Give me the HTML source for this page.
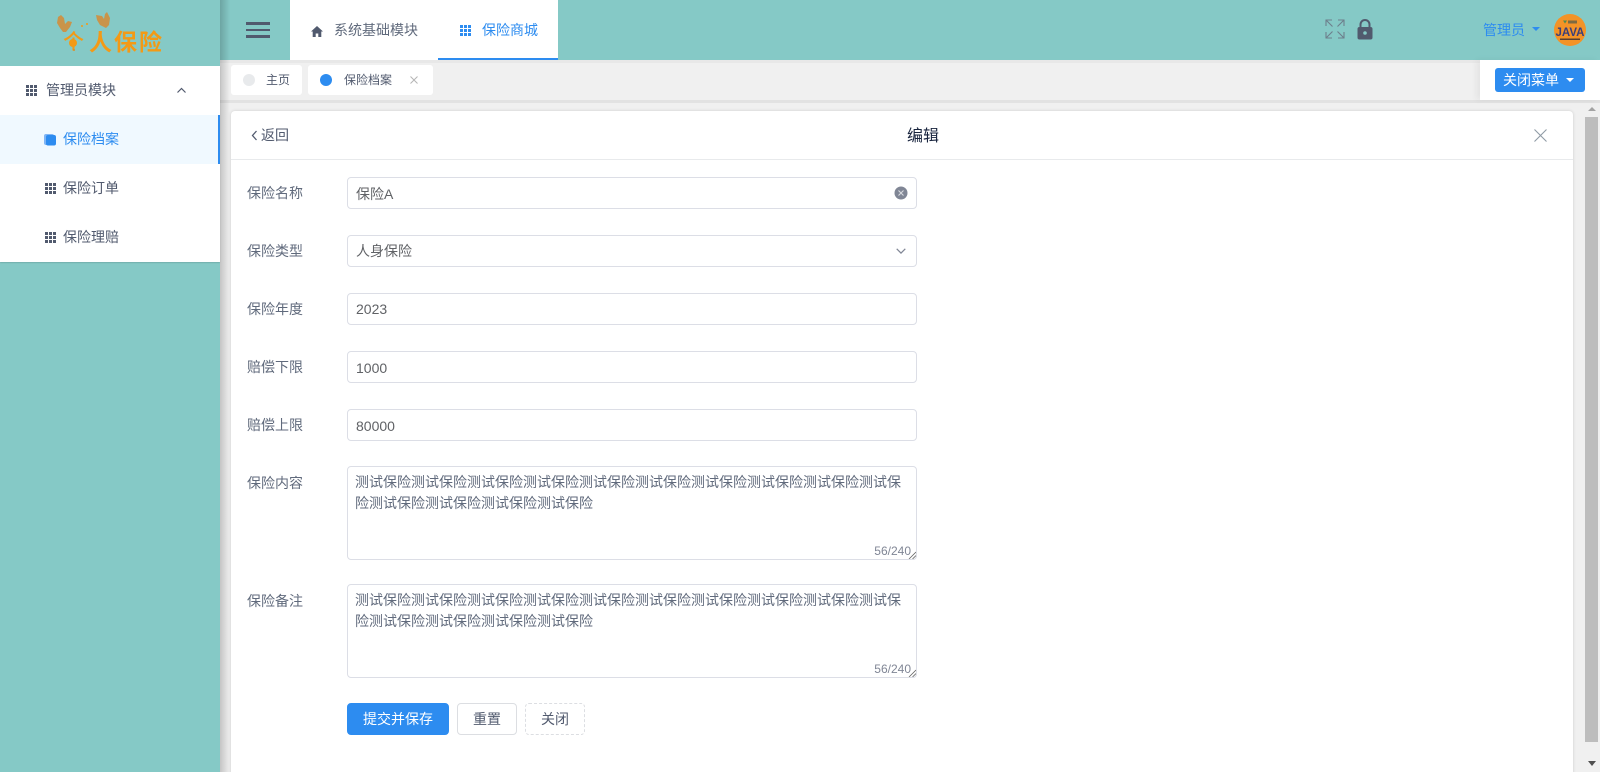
<!DOCTYPE html>
<html lang="zh"><head><meta charset="utf-8"><title>保险档案</title>
<style>
*{box-sizing:border-box;margin:0;padding:0}
html,body{width:1600px;height:772px;overflow:hidden}
body{position:relative;background:#f0f0f0;font:14px/20px "Liberation Sans","WenQuanYi Zen Hei","Noto Sans CJK SC",sans-serif;color:#515a6e}
.a{position:absolute}
.t{position:absolute;white-space:nowrap}
.in{position:absolute;left:347px;width:570px;height:32px;border:1px solid #dcdee6;border-radius:4px;background:#fff;padding:5px 8px;line-height:20px;color:#606266}
.ta{position:absolute;left:347px;width:570px;height:94px;border:1px solid #dcdee6;border-radius:4px;background:#fff;padding:5px 7px;line-height:21px;color:#606a7c;word-break:break-all}
.cnt{position:absolute;right:5px;bottom:0;font-size:12px;line-height:16px;color:#808695}
.lb{position:absolute;left:247px;white-space:nowrap;color:#606a7c}
.btn{position:absolute;top:703px;height:32px;border-radius:4px;text-align:center;line-height:30px;background:#fff;border:1px solid #dcdee2}
</style></head><body>

<!-- sidebar -->
<div class="a" style="left:0;top:0;width:220px;height:772px;background:#85c9c6"></div>
<!-- header -->
<div class="a" style="left:220px;top:0;width:1380px;height:60px;background:#85c9c6"></div>
<div class="a" style="left:220px;top:60px;width:1380px;height:40px;background:#f0f0f0;border-top:3px solid #e8e8e8"></div>
<div class="a" style="left:220px;top:100px;width:1380px;height:3px;background:#e2e2e2"></div>
<div class="a" style="left:220px;top:0;width:10px;height:772px;background:linear-gradient(90deg,#0000002e,#0000);pointer-events:none"></div>

<!-- logo -->
<svg class="a" style="left:50px;top:5px" width="125" height="50" viewBox="0 0 125 50">
<text x="13" y="44" font-family="'Noto Sans CJK SC',sans-serif" font-size="21" font-weight="500" fill="#f39a16">个</text>
<text x="39" y="45" font-family="'Noto Sans CJK SC',sans-serif" font-size="23" font-weight="700" fill="#f39a16" letter-spacing="2">人保险</text>
<path d="M8 12l3-2 3 3 1 6 3-3 4 1-2 5-4 5-3 0-3-4-3-5z" fill="#c9944a"/>
<path d="M46 10l6 1 2 3 1-5 2-2 3 6-1 7-3 3-6-3-3-5z" fill="#c9944a"/>
<circle cx="23" cy="38" r="4" fill="#f39a16"/><circle cx="24" cy="45" r="1" fill="#d98f28"/><circle cx="32" cy="21" r="1" fill="#f39a16"/><circle cx="37" cy="19" r="1" fill="#f39a16"/>
</svg>

<!-- menu -->
<div class="a" style="left:0;top:66px;width:220px;height:196px;background:#fff;box-shadow:0 1px 1px #0002"></div>
<div class="a" style="left:0;top:115px;width:220px;height:49px;background:#f0f9ff;border-right:2px solid #2d8cf0"></div>
<svg width="0" height="0" style="position:absolute"><defs>
<g id="g"><rect x="0" y="0" width="3" height="3"/><rect x="4" y="0" width="3" height="3"/><rect x="8" y="0" width="3" height="3"/><rect x="0" y="4" width="3" height="3"/><rect x="4" y="4" width="3" height="3"/><rect x="8" y="4" width="3" height="3"/><rect x="0" y="8" width="3" height="3"/><rect x="4" y="8" width="3" height="3"/><rect x="8" y="8" width="3" height="3"/></g>
</defs></svg>
<svg class="a" style="left:26px;top:85px" width="11" height="11" fill="#515a6e"><use href="#g"/></svg>
<div class="t" style="left:46px;top:80px">管理员模块</div>
<svg class="a" style="left:176px;top:87px" width="11" height="7" fill="none" stroke="#515a6e" stroke-width="1.2"><path d="M1.5 5.5L5.5 1.5 9.5 5.5"/></svg>
<svg class="a" style="left:44px;top:133px" width="13" height="13"><rect x="0" y="1" width="10" height="11" rx="2" fill="#7fb5f5"/><rect x="2" y="2" width="10" height="10.500" rx="2" fill="#2d8cf0"/></svg>
<div class="t" style="left:63px;top:129px;color:#2d8cf0">保险档案</div>
<svg class="a" style="left:45px;top:183px" width="11" height="11" fill="#515a6e"><use href="#g"/></svg>
<div class="t" style="left:63px;top:178px">保险订单</div>
<svg class="a" style="left:45px;top:232px" width="11" height="11" fill="#515a6e"><use href="#g"/></svg>
<div class="t" style="left:63px;top:227px">保险理赔</div>

<!-- hamburger -->
<div class="a" style="left:246px;top:22px;width:24px;height:3px;background:#515a6e"></div>
<div class="a" style="left:246px;top:29px;width:24px;height:2px;background:#515a6e"></div>
<div class="a" style="left:246px;top:35px;width:24px;height:3px;background:#515a6e"></div>

<!-- top tabs -->
<div class="a" style="left:290px;top:0;width:268px;height:60px;background:#fff"></div>
<div class="a" style="left:438px;top:58px;width:120px;height:2px;background:#2d8cf0"></div>
<svg class="a" style="left:311px;top:26px" width="12" height="11" fill="#515a6e"><path d="M6 0L0 5.500h1.700V11h3V7.500h2.600V11h3V5.500H12z"/></svg>
<div class="t" style="left:334px;top:20px;color:#606a7c">系统基础模块</div>
<svg class="a" style="left:460px;top:25px" width="11" height="11" fill="#2d8cf0"><use href="#g"/></svg>
<div class="t" style="left:482px;top:20px;color:#2d8cf0">保险商城</div>

<!-- header right -->
<svg class="a" style="left:1325px;top:19px" width="20" height="20" fill="none" stroke="#6d7f8c" stroke-width="1.100"><path d="M1 7V1h6M1 1l6.500 6.500M13 1h6v6M19 1l-6.500 6.500M1 13v6h6M1 19l6.500-6.500M19 13v6h-6M19 19l-6.500-6.500"/></svg>
<svg class="a" style="left:1357px;top:19px" width="16" height="21"><path d="M3.500 9V5.500a4.500 4.500 0 0 1 9 0V9" fill="none" stroke="#515a6e" stroke-width="2"/><rect x="0.500" y="8" width="15" height="12.500" rx="2" fill="#515a6e"/><circle cx="8" cy="14" r="1.800" fill="#85c9c6"/></svg>
<div class="t" style="left:1483px;top:20px;color:#2d8cf0">管理员</div>
<div class="a" style="left:1532px;top:27px;width:0;height:0;border:4px solid transparent;border-top:4px solid #2d8cf0;border-bottom:0"></div>
<svg class="a" style="left:1554px;top:14px" width="32" height="32"><circle cx="16" cy="16" r="16" fill="#f39327"/><path d="M9 6.500h4l-2 3z" fill="#4d8a50"/><rect x="14" y="6.500" width="9" height="3" fill="#7d6a40"/><text x="16" y="22" text-anchor="middle" font-family="'Liberation Sans',sans-serif" font-weight="700" font-size="11.500" fill="#3b3f7a">JAVA</text><rect x="6" y="24.500" width="20" height="1.500" fill="#5a4030"/></svg>

<!-- tag bar -->
<div class="a" style="left:231px;top:65px;width:71px;height:30px;background:#fff;border-radius:3px"></div>
<div class="a" style="left:243px;top:74px;width:12px;height:12px;border-radius:50%;background:#e8eaec"></div>
<div class="t" style="left:266px;top:70px;font-size:12px;line-height:20px">主页</div>
<div class="a" style="left:308px;top:65px;width:125px;height:30px;background:#fff;border-radius:3px"></div>
<div class="a" style="left:320px;top:74px;width:12px;height:12px;border-radius:50%;background:#2d8cf0"></div>
<div class="t" style="left:344px;top:70px;font-size:12px;line-height:20px">保险档案</div>
<svg class="a" style="left:410px;top:76px" width="8" height="8" fill="none" stroke="#b5b5b5" stroke-width="1"><path d="M0.500 0.500l7 7M7.500 0.500l-7 7"/></svg>

<div class="a" style="left:1480px;top:60px;width:120px;height:40px;background:#fff;box-shadow:-4px 0 6px #0000000d"></div>
<div class="a" style="left:1495px;top:68px;width:90px;height:24px;background:#2d8cf0;border-radius:3px"></div>
<div class="t" style="left:1503px;top:70px;color:#fff">关闭菜单</div>
<div class="a" style="left:1566px;top:78px;width:0;height:0;border:4px solid transparent;border-top:4px solid #fff;border-bottom:0"></div>

<!-- card -->
<div class="a" style="left:231px;top:111px;width:1342px;height:670px;background:#fff;border-radius:4px;box-shadow:0 0 3px #00000026"></div>
<div class="a" style="left:231px;top:159px;width:1342px;height:1px;background:#e8eaec"></div>
<svg class="a" style="left:251px;top:130px" width="7" height="11" fill="none" stroke="#515a6e" stroke-width="1.300"><path d="M5.500 1L1.500 5.500 5.500 10"/></svg>
<div class="t" style="left:261px;top:125px">返回</div>
<div class="t" style="left:907px;top:127px;font-size:16px;color:#17233d">编辑</div>
<svg class="a" style="left:1534px;top:129px" width="13" height="13" fill="none" stroke="#8f9aa5" stroke-width="1.100"><path d="M0.500 0.500l12 12M12.500 0.500l-12 12"/></svg>

<!-- form -->
<div class="lb" style="top:183px">保险名称</div>
<div class="in" style="top:177px;padding-top:6px">保险A</div>
<svg class="a" style="left:894px;top:186px" width="14" height="14"><circle cx="7" cy="7" r="6.500" fill="#808695"/><path d="M4.500 4.500l5 5M9.500 4.500l-5 5" stroke="#d8dbe0" stroke-width="1.100"/></svg>

<div class="lb" style="top:241px">保险类型</div>
<div class="in" style="top:235px">人身保险</div>
<svg class="a" style="left:896px;top:248px" width="10" height="7" fill="none" stroke="#808695" stroke-width="1.200"><path d="M0.700 0.800L5 5.100 9.300 0.800"/></svg>

<div class="lb" style="top:299px">保险年度</div>
<div class="in" style="top:293px">2023</div>
<div class="lb" style="top:357px">赔偿下限</div>
<div class="in" style="top:351px;padding-top:6px">1000</div>
<div class="lb" style="top:415px">赔偿上限</div>
<div class="in" style="top:409px;padding-top:6px">80000</div>

<div class="lb" style="top:473px">保险内容</div>
<div class="ta" style="top:466px">测试保险测试保险测试保险测试保险测试保险测试保险测试保险测试保险测试保险测试保险测试保险测试保险测试保险测试保险<span class="cnt">56/240</span><svg class="a" style="right:0;bottom:0" width="8" height="8" stroke="#666" stroke-width="0.800"><path d="M1 8l7-7M4.500 8L8 4.500"/></svg></div>

<div class="lb" style="top:591px">保险备注</div>
<div class="ta" style="top:584px">测试保险测试保险测试保险测试保险测试保险测试保险测试保险测试保险测试保险测试保险测试保险测试保险测试保险测试保险<span class="cnt">56/240</span><svg class="a" style="right:0;bottom:0" width="8" height="8" stroke="#666" stroke-width="0.800"><path d="M1 8l7-7M4.500 8L8 4.500"/></svg></div>

<div class="btn" style="left:347px;width:102px;background:#2d8cf0;border-color:#2d8cf0;color:#fff">提交并保存</div>
<div class="btn" style="left:457px;width:60px">重置</div>
<div class="btn" style="left:525px;width:60px;border-style:dashed">关闭</div>

<!-- scrollbar -->
<div class="a" style="left:1585px;top:117px;width:13px;height:625px;background:#bdbdbd"></div>
<div class="a" style="left:1588px;top:107px;width:0;height:0;border:4px solid transparent;border-bottom:4px solid #a3a3a3;border-top:0"></div>
<div class="a" style="left:1588px;top:761px;width:0;height:0;border:4px solid transparent;border-top:5px solid #505050;border-bottom:0"></div>
</body></html>
